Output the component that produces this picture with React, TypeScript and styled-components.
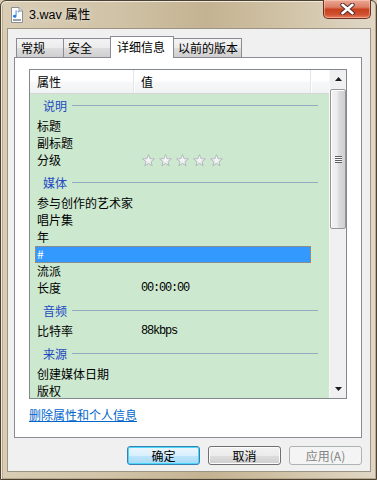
import React from "react";
import styled, { createGlobalStyle } from "styled-components";

const Global = createGlobalStyle`
  html, body { margin: 0; padding: 0; width: 377px; height: 480px; overflow: hidden; background: #d8ccb2; }
  body { font-family: "Noto Sans CJK SC", "Liberation Sans", sans-serif; font-size: 12px; color: #000; }
  * { box-sizing: border-box; }
`;

const Window = styled.div`
  width: 377px;
  height: 480px;
  display: flex;
  flex-direction: column;
  border: 1px solid #4b4233;
  border-radius: 6px 6px 0 0;
  background: linear-gradient(90deg, #d9cdb5 0%, #d0c3a7 30%, #c4b392 55%, #d0c2a5 75%, #e0d7c6 100%);
  box-shadow: inset 1px 1px 0 #efe9dc, inset -1px -1px 0 #b9a98a, inset 2px 0 0 #bfae8c;
`;

const TitleBar = styled.div`
  height: 27px;
  display: flex;
  align-items: flex-start;
  padding-left: 9px;
`;

const TitleIcon = styled.svg`
  width: 14px;
  height: 16px;
  margin-top: 6px;
  flex: none;
`;

const TitleText = styled.div`
  margin-left: 5px;
  margin-top: 5px;
  line-height: 18px;
  font-size: 12.5px;
  font-family: "Liberation Sans", "Noto Sans CJK SC", sans-serif;
  color: #000;
  text-shadow: 0 0 6px rgba(255, 255, 255, 0.7);
  flex: 1;
`;

const CloseButton = styled.div`
  width: 48px;
  height: 19px;
  margin-top: -1px;
  margin-right: 5px;
  border: 1px solid #6e2e22;
  border-top: none;
  border-radius: 0 0 5px 5px;
  background: linear-gradient(#eba996 0%, #dc7d64 40%, #c8421f 52%, #d0502f 80%, #e6805f 100%);
  box-shadow: inset 0 0 0 1px rgba(255, 220, 200, 0.45);
  display: flex;
  align-items: center;
  justify-content: center;
`;

const Body = styled.div`
  flex: 1;
  margin: 0 5px 7px 6px;
  border: 1px solid #9c9483;
  background: #f0f0f0;
  padding: 7px 8px 6px 6px;
  display: flex;
  flex-direction: column;
`;

const TabRow = styled.div`
  height: 21px;
  margin-left: 2px;
  display: flex;
  align-items: flex-end;
  position: relative;
  z-index: 1;
`;

const Tab = styled.div<{ $w: number; $active?: boolean }>`
  width: ${(p) => p.$w}px;
  height: ${(p) => (p.$active ? 22 : 19)}px;
  margin-left: -1px;
  margin-bottom: ${(p) => (p.$active ? -1 : 0)}px;
  border: 1px solid #898c95;
  border-bottom: ${(p) => (p.$active ? "none" : "0")};
  padding-left: ${(p) => (p.$active ? 6 : 4)}px;
  padding-top: ${(p) => (p.$active ? 1 : 0)}px;
  line-height: 18px;
  white-space: nowrap;
  background: ${(p) =>
    p.$active ? "#ffffff" : "linear-gradient(#f3f3f3 0%, #ebebeb 50%, #dddddd 51%, #cfcfcf 100%)"};
  &:first-child { margin-left: 0; }
`;

const Panel = styled.div`
  height: 381px;
  border: 1px solid #898c95;
  background: #ffffff;
  padding: 11px 14px 0 14px;
  display: flex;
  flex-direction: column;
`;

const ListView = styled.div`
  width: 318px;
  height: 330px;
  border: 1px solid #828790;
  display: flex;
  overflow: hidden;
`;

const ListContent = styled.div`
  width: 299px;
  display: flex;
  flex-direction: column;
  background: #cce8cf;
  overflow: hidden;
`;

const Header = styled.div`
  height: 24px;
  flex: none;
  display: flex;
  border-bottom: 1px solid #d5d5d5;
  background: linear-gradient(#ffffff 0%, #ffffff 45%, #f6f7f8 55%, #f1f2f4 100%);
`;

const HeaderCell = styled.div<{ $w?: number }>`
  ${(p) => (p.$w ? `width: ${p.$w}px;` : "flex: 1;")}
  padding-left: 7px;
  padding-top: 3px;
  line-height: 18px;
  border-right: 1px solid #e3e5e9;
  box-shadow: 1px 0 0 #ffffff;
  &:last-child { border-right: none; box-shadow: none; }
`;

const Group = styled.div<{ $first?: boolean }>`
  height: 22px;
  flex: none;
  margin-top: ${(p) => (p.$first ? 2 : 4)}px;
  padding: 0 11px 3px 13px;
  display: flex;
  align-items: center;
`;

const GroupLabel = styled.span`
  color: #2148c2;
  line-height: 16px;
`;

const GroupLine = styled.div`
  flex: 1;
  height: 1px;
  margin-left: 5px;
  background: #94acc0;
`;

const Row = styled.div<{ $selected?: boolean }>`
  height: 17px;
  flex: none;
  width: 276px;
  margin-left: 5px;
  padding-left: 2px;
  padding-bottom: 1px;
  display: flex;
  align-items: center;
  line-height: 16px;
  white-space: nowrap;
  background: ${(p) => (p.$selected ? "#3399ff" : "transparent")};
  color: ${(p) => (p.$selected ? "#ffffff" : "#000000")};
  outline: ${(p) => (p.$selected ? "1px dotted #d9822b" : "none")};
  outline-offset: -1px;
`;

const Label = styled.span`
  width: 104px;
  flex: none;
`;

const Value = styled.span`
  font-family: "Liberation Mono", monospace;
  font-size: 12px;
  letter-spacing: -1.2px;
`;

const Stars = styled.div`
  display: flex;
  gap: 4px;
  margin-left: 1px;
`;

const ScrollBar = styled.div`
  width: 17px;
  display: flex;
  flex-direction: column;
  background: #f0f0f0;
  border-left: 1px solid #f7f7f7;
`;

const ScrollArrow = styled.div`
  height: 18px;
  flex: none;
  display: flex;
  align-items: center;
  justify-content: center;
`;

const Thumb = styled.div`
  height: 140px;
  flex: none;
  margin: 1px 0 0 0;
  border: 1px solid #979797;
  border-radius: 2px;
  background: linear-gradient(90deg, #f2f2f2 0%, #ececec 45%, #dcdcdc 55%, #cfcfcf 100%);
  box-shadow: inset 1px 1px 0 #fff;
  display: flex;
  align-items: center;
  justify-content: center;
`;

const Track = styled.div`
  flex: 1;
`;

const Grip = styled.div`
  width: 7px;
  height: 7px;
  background: repeating-linear-gradient(#5f5f5f 0 1px, #fafafa 1px 2px);
`;

const Link = styled.a`
  margin-top: 8px;
  line-height: 16px;
  color: #0066cc;
  text-decoration: underline;
  align-self: flex-start;
  cursor: pointer;
`;

const ButtonRow = styled.div`
  margin-top: 8px;
  display: flex;
  justify-content: flex-end;
  gap: 8px;
`;

const Button = styled.div<{ $kind?: "default" | "disabled" }>`
  width: 73px;
  height: 19px;
  border-radius: 3px;
  display: flex;
  align-items: center;
  justify-content: center;
  line-height: 17px;
  border: 1px solid
    ${(p) => (p.$kind === "default" ? "#3c7fb1" : p.$kind === "disabled" ? "#adb2b5" : "#707070")};
  color: ${(p) => (p.$kind === "disabled" ? "#838383" : "#000")};
  background: ${(p) =>
    p.$kind === "default"
      ? "linear-gradient(#eaf6fd 0%, #d9f0fc 50%, #bee6fd 51%, #a7d9f5 100%)"
      : p.$kind === "disabled"
      ? "#f4f4f4"
      : "linear-gradient(#f2f2f2 0%, #ebebeb 50%, #dddddd 51%, #cfcfcf 100%)"};
  box-shadow: ${(p) =>
    p.$kind === "default"
      ? "inset 0 0 0 1px #48d8fb"
      : p.$kind === "disabled"
      ? "none"
      : "inset 0 0 0 1px #fcfcfc"};
`;

const Star = () => (
  <svg width="13" height="13" viewBox="0 0 13 13">
    <defs>
      <linearGradient id="sg" x1="0" y1="0" x2="0" y2="1">
        <stop offset="0" stopColor="#ffffff" />
        <stop offset="1" stopColor="#e6e8ea" />
      </linearGradient>
    </defs>
    <polygon
      points="6.5,0.6 8.03,4.7 12.4,4.88 8.97,7.6 10.15,11.82 6.5,9.4 2.85,11.82 4.03,7.6 0.6,4.88 4.97,4.7"
      fill="url(#sg)"
      stroke="#b4b9be"
      strokeWidth="1"
      strokeLinejoin="round"
    />
  </svg>
);

type Item = { label: string; value?: string; stars?: boolean; selected?: boolean };
type Section = { title: string; items: Item[] };

const sections: Section[] = [
  { title: "说明", items: [{ label: "标题" }, { label: "副标题" }, { label: "分级", stars: true }] },
  {
    title: "媒体",
    items: [
      { label: "参与创作的艺术家" },
      { label: "唱片集" },
      { label: "年" },
      { label: "#", selected: true },
      { label: "流派" },
      { label: "长度", value: "00:00:00" },
    ],
  },
  { title: "音频", items: [{ label: "比特率", value: "88kbps" }] },
  { title: "来源", items: [{ label: "创建媒体日期" }, { label: "版权" }] },
];

export default function App() {
  return (
    <>
      <Global />
      <Window>
        <TitleBar>
          <TitleIcon viewBox="0 0 14 16">
            <path d="M1.5 0.5 H9 L12.5 4 V15.5 H1.5 Z" fill="#ffffff" stroke="#8a8f96" />
            <path d="M9 0.5 V4 H12.5" fill="#e8e8e8" stroke="#8a8f96" />
            <path d="M6.5 3.5 V9.2 A1.8 1.5 0 1 1 5.6 8 V3.5 L9 4.6 V5.8 Z" fill="#2a7de0" />
            <rect x="3" y="12" width="8" height="2" fill="#9aa0a8" />
          </TitleIcon>
          <TitleText>3.wav 属性</TitleText>
          <CloseButton>
            <svg width="15" height="12" viewBox="0 0 15 12">
              <path d="M2.5 1.8 L12.5 10.2 M12.5 1.8 L2.5 10.2" stroke="#4a2a26" strokeWidth="4.4" strokeLinecap="round" />
              <path d="M2.5 1.8 L12.5 10.2 M12.5 1.8 L2.5 10.2" stroke="#ffffff" strokeWidth="2.6" strokeLinecap="round" />
            </svg>
          </CloseButton>
        </TitleBar>
        <Body>
          <TabRow>
            <Tab $w={48}>常规</Tab>
            <Tab $w={48}>安全</Tab>
            <Tab $w={64} $active>
              详细信息
            </Tab>
            <Tab $w={69}>以前的版本</Tab>
          </TabRow>
          <Panel>
            <ListView>
              <ListContent>
                <Header>
                  <HeaderCell $w={104}>属性</HeaderCell>
                  <HeaderCell $w={177}>值</HeaderCell>
                  <HeaderCell />
                </Header>
                {sections.map((s, i) => (
                  <React.Fragment key={s.title}>
                    <Group $first={i === 0}>
                      <GroupLabel>{s.title}</GroupLabel>
                      <GroupLine />
                    </Group>
                    {s.items.map((it) => (
                      <Row key={it.label} $selected={it.selected}>
                        <Label>{it.label}</Label>
                        {it.value && <Value>{it.value}</Value>}
                        {it.stars && (
                          <Stars>
                            {[0, 1, 2, 3, 4].map((k) => (
                              <Star key={k} />
                            ))}
                          </Stars>
                        )}
                      </Row>
                    ))}
                  </React.Fragment>
                ))}
              </ListContent>
              <ScrollBar>
                <ScrollArrow>
                  <svg width="7" height="4" viewBox="0 0 7 4">
                    <polygon points="0,4 3.5,0 7,4" fill="#1c1c1c" />
                  </svg>
                </ScrollArrow>
                <Thumb>
                  <Grip />
                </Thumb>
                <Track />
                <ScrollArrow>
                  <svg width="7" height="4" viewBox="0 0 7 4">
                    <polygon points="0,0 7,0 3.5,4" fill="#1c1c1c" />
                  </svg>
                </ScrollArrow>
              </ScrollBar>
            </ListView>
            <Link>删除属性和个人信息</Link>
          </Panel>
          <ButtonRow>
            <Button $kind="default">确定</Button>
            <Button>取消</Button>
            <Button $kind="disabled">应用(A)</Button>
          </ButtonRow>
        </Body>
      </Window>
    </>
  );
}
